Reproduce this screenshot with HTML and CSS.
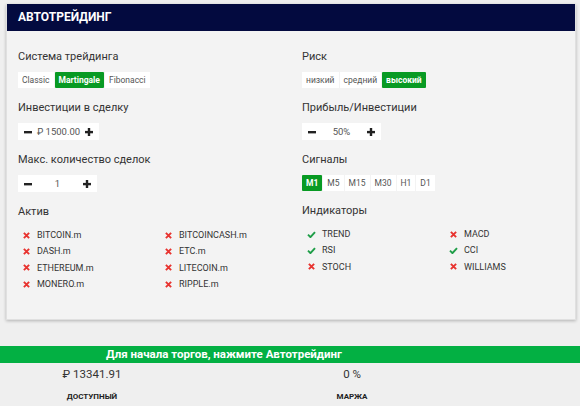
FILE: index.html
```html
<!DOCTYPE html>
<html lang="ru">
<head>
<meta charset="utf-8">
<title>Автотрейдинг</title>
<link rel="stylesheet" href="styles.css">
</head>
<body>
<div class="card">
  <div class="card-head">АВТОТРЕЙДИНГ</div>
  <div class="card-body">
    <div class="col">
      <div class="field">
        <div class="label">Система трейдинга</div>
        <div class="seg">
          <span class="opt">Classic</span><span class="opt on">Martingale</span><span class="opt">Fibonacci</span>
        </div>
      </div>
      <div class="field">
        <div class="label">Инвестиции в сделку</div>
        <div class="stepper w81">
          <svg class="ic" viewBox="0 0 8 8"><rect x="0" y="3" width="8" height="2.4"/></svg>
          <span class="val">₽ 1500.00</span>
          <svg class="ic" viewBox="0 0 8 8"><rect x="0" y="2.9" width="8" height="2.4"/><rect x="2.8" y="0" width="2.4" height="8"/></svg>
        </div>
      </div>
      <div class="field">
        <div class="label">Макс. количество сделок</div>
        <div class="stepper w79">
          <svg class="ic" viewBox="0 0 8 8"><rect x="0" y="3" width="8" height="2.4"/></svg>
          <span class="val">1</span>
          <svg class="ic" viewBox="0 0 8 8"><rect x="0" y="2.9" width="8" height="2.4"/><rect x="2.8" y="0" width="2.4" height="8"/></svg>
        </div>
      </div>
      <div class="field">
        <div class="label lab-list">Актив</div>
        <ul class="list">
          <li><svg class="x" viewBox="0 0 8 8"><path d="M1 1L7 7M7 1L1 7"/></svg>BITCOIN.m</li>
          <li><svg class="x" viewBox="0 0 8 8"><path d="M1 1L7 7M7 1L1 7"/></svg>BITCOINCASH.m</li>
          <li><svg class="x" viewBox="0 0 8 8"><path d="M1 1L7 7M7 1L1 7"/></svg>DASH.m</li>
          <li><svg class="x" viewBox="0 0 8 8"><path d="M1 1L7 7M7 1L1 7"/></svg>ETC.m</li>
          <li><svg class="x" viewBox="0 0 8 8"><path d="M1 1L7 7M7 1L1 7"/></svg>ETHEREUM.m</li>
          <li><svg class="x" viewBox="0 0 8 8"><path d="M1 1L7 7M7 1L1 7"/></svg>LITECOIN.m</li>
          <li><svg class="x" viewBox="0 0 8 8"><path d="M1 1L7 7M7 1L1 7"/></svg>MONERO.m</li>
          <li><svg class="x" viewBox="0 0 8 8"><path d="M1 1L7 7M7 1L1 7"/></svg>RIPPLE.m</li>
        </ul>
      </div>
    </div>
    <div class="col">
      <div class="field">
        <div class="label">Риск</div>
        <div class="seg">
          <span class="opt">низкий</span><span class="opt">средний</span><span class="opt on">высокий</span>
        </div>
      </div>
      <div class="field">
        <div class="label">Прибыль/Инвестиции</div>
        <div class="stepper w79">
          <svg class="ic" viewBox="0 0 8 8"><rect x="0" y="3" width="8" height="2.4"/></svg>
          <span class="val">50%</span>
          <svg class="ic" viewBox="0 0 8 8"><rect x="0" y="2.9" width="8" height="2.4"/><rect x="2.8" y="0" width="2.4" height="8"/></svg>
        </div>
      </div>
      <div class="field">
        <div class="label">Сигналы</div>
        <div class="seg sig">
          <span class="opt on">M1</span><span class="opt">M5</span><span class="opt">M15</span><span class="opt">M30</span><span class="opt">H1</span><span class="opt">D1</span>
        </div>
      </div>
      <div class="field">
        <div class="label lab-list">Индикаторы</div>
        <ul class="list ind">
          <li><svg class="ok" viewBox="0 0 10 8"><path d="M1 4.2L3.8 7L9 1.2"/></svg>TREND</li>
          <li><svg class="x" viewBox="0 0 8 8"><path d="M1 1L7 7M7 1L1 7"/></svg>MACD</li>
          <li><svg class="ok" viewBox="0 0 10 8"><path d="M1 4.2L3.8 7L9 1.2"/></svg>RSI</li>
          <li><svg class="ok" viewBox="0 0 10 8"><path d="M1 4.2L3.8 7L9 1.2"/></svg>CCI</li>
          <li><svg class="x" viewBox="0 0 8 8"><path d="M1 1L7 7M7 1L1 7"/></svg>STOCH</li>
          <li><svg class="x" viewBox="0 0 8 8"><path d="M1 1L7 7M7 1L1 7"/></svg>WILLIAMS</li>
        </ul>
      </div>
    </div>
  </div>
</div>

<div class="bar"><span>Для начала торгов, нажмите Автотрейдинг</span></div>
<div class="stats">
  <div class="stat">
    <div class="num">₽ 13341.91</div>
    <div class="cap">ДОСТУПНЫЙ</div>
  </div>
  <div class="stat">
    <div class="num">0 %</div>
    <div class="cap">МАРЖА</div>
  </div>
</div>
</body>
</html>
```

FILE: styles.css
```css
* { box-sizing: border-box; }
html, body { margin: 0; padding: 0; }
body {
  background: #efefef;
  font-family: Roboto, "Liberation Sans", sans-serif;
  color: #333;
  width: 580px;
  height: 406px;
  overflow: hidden;
}
.card {
  margin: 4px 4px 0 6px;
  width: 570px;
  background: #f3f3f3;
  border: 1px solid #e0e0e0;
  border-top: 0;
  box-shadow: 0 1px 3px rgba(0,0,0,0.25);
}
.card-head {
  height: 27px;
  background: #030a3f;
  color: #fff;
  font-weight: 700;
  font-size: 12px;
  line-height: 27px;
  padding-left: 11px;
}
.card-body {
  display: grid;
  grid-template-columns: 284px 1fr;
  padding: 19px 11px 27px 11px;
}
.field { margin-bottom: 13px; }
.field:last-child { margin-bottom: 0; }
.label {
  font-size: 11px;
  line-height: 14px;
  height: 14px;
  margin-bottom: 8px;
  color: #333;
}
.lab-list { margin-top: 1px; margin-bottom: 7px; }
.seg { display: flex; gap: 1px; height: 16px; }
.opt {
  background: #fff;
  font-size: 8.5px;
  line-height: 16px;
  padding: 0 4px;
  color: #555;
}
.opt.on { background: #089a23; color: #fff; font-weight: 700; border-radius: 1px; }
.stepper {
  display: flex;
  align-items: center;
  justify-content: space-between;
  background: #fff;
  height: 17px;
  padding: 0 6px 0 6px;
}
.w81 { width: 81px; }
.w79 { width: 79px; }
.ic { width: 8px; height: 8px; fill: #222; }
.val { font-size: 9.5px; color: #555; }
.list {
  list-style: none;
  margin: 8px 0 0 0;
  padding: 0 0 0 5px;
  display: grid;
  grid-template-columns: 142px 142px;
}
.list li {
  display: flex;
  align-items: center;
  height: 16.3px;
  font-size: 9px;
  color: #333;
}
.x { width: 7px; height: 7px; margin-right: 7px; stroke: #e8332f; stroke-width: 2.2; fill: none; }
.ok { width: 9px; height: 7px; margin-right: 6px; stroke: #1f9e48; stroke-width: 2.2; fill: none; }
.ind li .x { margin-left: 1px; margin-right: 7px; }
.bar {
  margin-top: 26px;
  height: 17px;
  background: #03b043;
  color: #fff;
  font-weight: 700;
  font-size: 11.5px;
  line-height: 17px;
}
.bar span { display: block; width: 448px; text-align: center; }
.stats {
  display: grid;
  grid-template-columns: 184px 336px;
}
.stat { text-align: center; }
.num { font-size: 11.5px; line-height: 14px; margin-top: 4px; color: #333; }
.cap { font-size: 8px; font-weight: 700; margin-top: 11px; color: #222; }
```
